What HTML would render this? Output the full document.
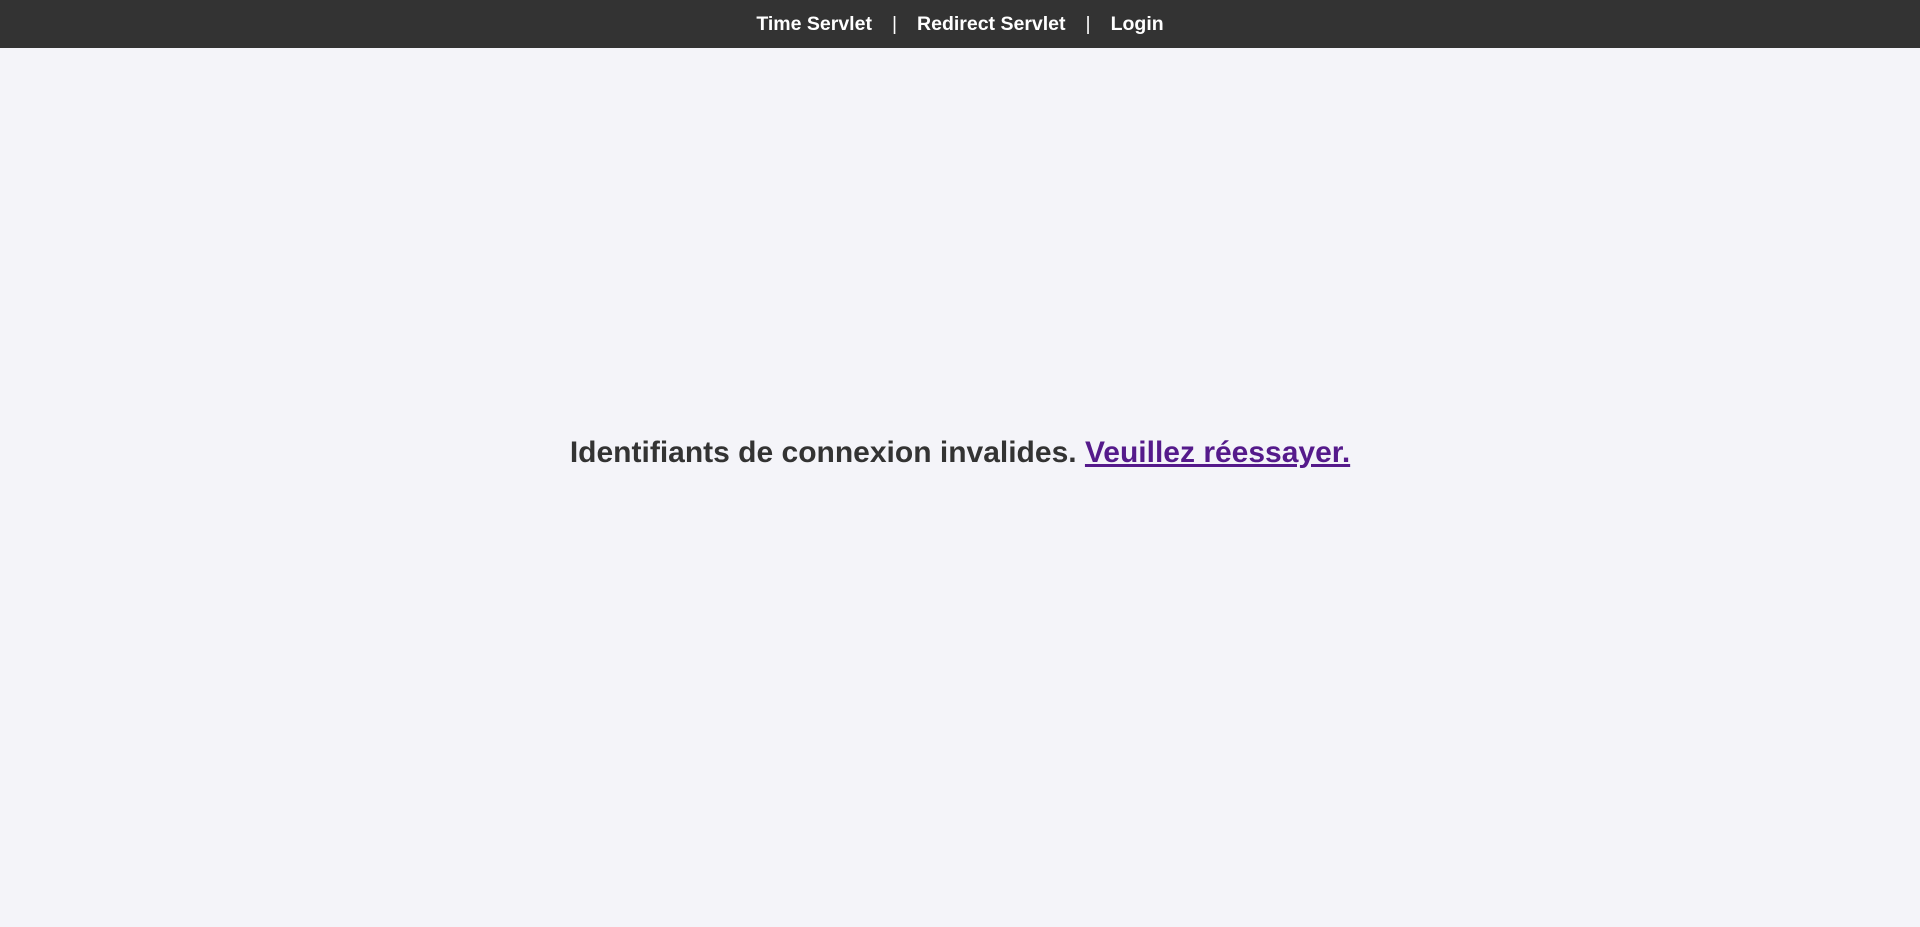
<!DOCTYPE html>
<html><head><meta charset="utf-8"><style>
html,body{margin:0;padding:0;}
body{width:1920px;height:927px;background:#f4f4f9;font-family:"Liberation Sans",Arial,sans-serif;overflow:hidden;}
nav{height:48px;background:#333;color:#fff;text-align:center;font-weight:bold;font-size:19.5px;line-height:48px;}
nav a{color:#fff;text-decoration:none;}
nav span{margin:0 20px;font-weight:normal;}
h2{position:absolute;left:0;right:0;top:434px;margin:0;text-align:center;font-size:30px;line-height:38px;color:#333;font-weight:bold;}
h2 a{color:#551a8b;text-decoration:underline;}
</style></head><body>
<nav><a>Time Servlet</a><span>|</span><a>Redirect Servlet</a><span>|</span><a>Login</a></nav>
<h2>Identifiants de connexion invalides. <a>Veuillez réessayer.</a></h2>
</body></html>
